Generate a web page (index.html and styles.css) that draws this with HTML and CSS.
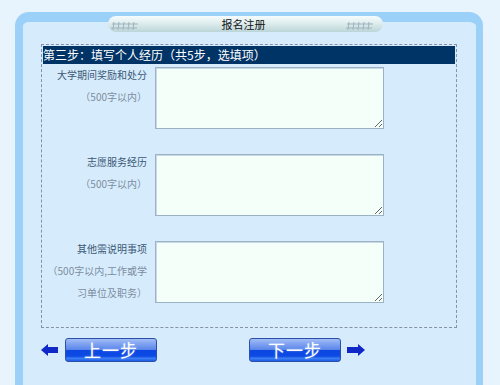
FILE: index.html
```html
<!DOCTYPE html>
<html lang="zh-CN">
<head>
<meta charset="utf-8">
<title>报名注册</title>
<link rel="stylesheet" href="styles.css">
</head>
<body>
<div class="panel">
  <div class="tab">
    <svg class="deco" width="32" height="10" viewBox="0 0 32 10">
      <g stroke="#9fb4bc" stroke-width="1" fill="none">
        <path d="M2 3h26M1 7h26"/>
        <path d="M4 1l-1 8M9 1l-1 8M14 1l-1 8M19 1l-1 8M24 1l-1 8"/>
      </g>
    </svg>
    <span class="tab-title">报名注册</span>
    <svg class="deco" width="32" height="10" viewBox="0 0 32 10">
      <g stroke="#9fb4bc" stroke-width="1" fill="none">
        <path d="M2 3h26M1 7h26"/>
        <path d="M4 1l-1 8M9 1l-1 8M14 1l-1 8M19 1l-1 8M24 1l-1 8"/>
      </g>
    </svg>
  </div>

  <div class="box">
    <div class="bar">第三步：填写个人经历（共5步，选填项）</div>
    <div class="rows">
      <div class="row">
        <div class="label">
          <p class="name">大学期间奖励和处分</p>
          <p class="note">（500字以内）</p>
        </div>
        <textarea class="field"></textarea>
      </div>
      <div class="row">
        <div class="label">
          <p class="name">志愿服务经历</p>
          <p class="note">（500字以内）</p>
        </div>
        <textarea class="field"></textarea>
      </div>
      <div class="row">
        <div class="label">
          <p class="name">其他需说明事项</p>
          <p class="note">（500字以内,工作或学</p>
          <p class="note">习单位及职务）</p>
        </div>
        <textarea class="field"></textarea>
      </div>
    </div>
  </div>

  <div class="nav">
    <svg class="arrow" width="17" height="12" viewBox="0 0 17 12">
      <polygon points="0,6 7,0 7,3 17,3 17,9 7,9 7,12" fill="#1028c8"/>
    </svg>
    <button class="btn" type="button">上一步</button>
    <button class="btn btn-next" type="button">下一步</button>
    <svg class="arrow" width="18" height="12" viewBox="0 0 18 12">
      <polygon points="18,6 11,0 11,3 0,3 0,9 11,9 11,12" fill="#1028c8"/>
    </svg>
  </div>
</div>
</body>
</html>
```

FILE: styles.css
```css
html, body {
  margin: 0;
  padding: 0;
  height: 385px;
  overflow: hidden;
  background: #e7f4fd;
  font-family: "Noto Sans CJK SC", "Noto Sans", sans-serif;
}

.panel {
  position: relative;
  margin: 12px 0 0 15px;
  width: 453px;
  height: 380px;
  border-style: solid;
  border-color: #9bd0f8;
  border-width: 10px 7px 0 8px;
  border-radius: 14px 14px 0 0;
  background: #d6ecfd;
  box-sizing: content-box;
}

.tab {
  position: absolute;
  left: 85px;
  top: -6px;
  width: 275px;
  height: 16px;
  border-radius: 8px;
  background: linear-gradient(to bottom, #f6fcfc 0%, #e2eff0 40%, #bcd5d8 100%);
  display: flex;
  align-items: center;
  justify-content: space-between;
  padding: 0 6px 0 2px;
  box-sizing: border-box;
}

.deco {
  display: block;
  margin-top: 3px;
}

.tab-title {
  font-size: 11px;
  line-height: 16px;
  color: #111;
}

.box {
  margin: 22px 0 0 18px;
  width: 412px;
  padding: 1px;
  border: 1px dashed #8591a8;
}

.bar {
  height: 18px;
  line-height: 18px;
  background: #003366;
  color: #ffffff;
  font-size: 12px;
  white-space: nowrap;
}

.rows {
  display: flex;
  flex-direction: column;
  gap: 25px;
  padding: 3px 0 22px;
}

.row {
  display: flex;
  align-items: flex-start;
}

.label {
  width: 104px;
  margin-top: -3px;
  text-align: right;
  font-size: 10px;
  line-height: 22px;
  white-space: nowrap;
}

.label p {
  margin: 0;
}

.name {
  color: #3c5874;
}

.note {
  color: #7d8ca0;
}

.field {
  margin: 0 0 0 8px;
  width: 229px;
  height: 62px;
  box-sizing: border-box;
  border: 1px solid #9cb3c6;
  box-shadow: inset 1px 1px 0 #c8d8e4;
  background: #f4fff9;
  padding: 2px;
  font-size: 12px;
  font-family: inherit;
}

.nav {
  display: flex;
  align-items: center;
  margin: 10px 0 0 18px;
}

.arrow {
  display: block;
}

.btn {
  margin: 0 0 0 7px;
  width: 92px;
  height: 24px;
  padding: 0;
  border: 1px solid #2c4fa8;
  border-radius: 3px;
  background: linear-gradient(to bottom,
    #a2bef6 0%, #7c9ff0 25%, #5a86ea 48%,
    #0c46e2 52%, #0d4ae4 78%, #3c7ef2 88%, #1c5ce8 100%);
  color: #ffffff;
  font-family: "Noto Sans CJK SC", sans-serif;
  font-size: 17px;
  line-height: 22px;
  letter-spacing: 1px;
  text-shadow: 0 0 2px rgba(200, 220, 255, 0.6);
  cursor: pointer;
}

.btn-next {
  margin: 0 6px 0 92px;
}
```
